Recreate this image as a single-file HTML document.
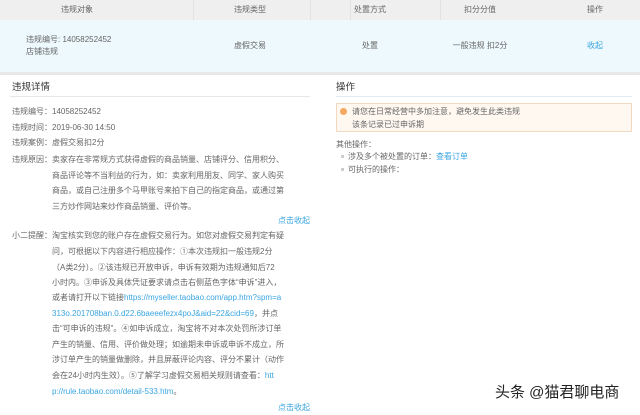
<!DOCTYPE html>
<html><head><meta charset="utf-8"><style>
*{margin:0;padding:0}
body{width:640px;height:415px;background:#fff;position:relative;overflow:hidden;font-family:"Liberation Sans","Noto Sans CJK SC",sans-serif;font-size:8px;color:#666}
.a{position:absolute;white-space:nowrap;line-height:12px}
.l{color:#3aa5e0}
.c{transform:translateX(-50%)}
</style></head><body>
<div style="position:absolute;left:0;top:0;width:640px;height:20px;background:#efefef"></div>
<div style="position:absolute;left:193px;top:0;width:1px;height:20px;background:#e2e2e2"></div>
<div style="position:absolute;left:310px;top:0;width:1px;height:20px;background:#e2e2e2"></div>
<div style="position:absolute;left:350px;top:0;width:1px;height:20px;background:#e2e2e2"></div>
<div style="position:absolute;left:440px;top:0;width:1px;height:20px;background:#e2e2e2"></div>
<div style="position:absolute;left:0;top:20px;width:640px;height:52px;background:#eef9fd"></div>
<div style="position:absolute;left:0;top:72px;width:640px;height:3px;background:#e8e8e8"></div>
<div class="a c" style="left:77px;top:4px">违规对象</div>
<div class="a c" style="left:250px;top:4px">违规类型</div>
<div class="a c" style="left:370px;top:4px">处置方式</div>
<div class="a c" style="left:480px;top:4px">扣分分值</div>
<div class="a c" style="left:595px;top:4px">操作</div>
<div class="a" style="left:26px;top:34px">违规编号: 14058252452</div>
<div class="a" style="left:26px;top:46px">店铺违规</div>
<div class="a c" style="left:250px;top:40px">虚假交易</div>
<div class="a c" style="left:370px;top:40px">处置</div>
<div class="a c" style="left:480px;top:40px">一般违规 扣2分</div>
<div class="a c l" style="left:595px;top:40px">收起</div>

<div class="a" style="left:12px;top:82px;font-size:9.5px;color:#333">违规详情</div>
<div style="position:absolute;left:10px;top:96px;width:300px;height:1px;background:#e6e6e6"></div>
<div class="a" style="left:12px;top:106px">违规编号：14058252452</div>
<div class="a" style="left:12px;top:122px">违规时间：2019-06-30 14:50</div>
<div class="a" style="left:12px;top:137px">违规案例：虚假交易扣2分</div>
<div class="a" style="left:12px;top:154px">违规原因：卖家存在非常规方式获得虚假的商品销量、店铺评分、信用积分、</div>
<div class="a" style="left:52px;top:170px">商品评论等不当利益的行为，如：卖家利用朋友、同学、家人购买</div>
<div class="a" style="left:52px;top:185px">商品，或自己注册多个马甲账号来拍下自己的指定商品，或通过第</div>
<div class="a" style="left:52px;top:201px">三方炒作网站来炒作商品销量、评价等。</div>
<div class="a l" style="left:278px;top:215px">点击收起</div>
<div class="a" style="left:12px;top:230px">小二提醒：淘宝核实到您的账户存在虚假交易行为。如您对虚假交易判定有疑</div>
<div class="a" style="left:52px;top:246px">问，可根据以下内容进行相应操作：①本次违规扣一般违规2分</div>
<div class="a" style="left:52px;top:262px">（A类2分）。②该违规已开放申诉，申诉有效期为违规通知后72</div>
<div class="a" style="left:52px;top:277px">小时内。③申诉及具体凭证要求请点击右侧蓝色字体“申诉”进入，</div>
<div class="a" style="left:52px;top:292px">或者请打开以下链接<span class="l">https://myseller.taobao.com/app.htm?spm=a</span></div>
<div class="a" style="left:52px;top:308px"><span class="l">313o.201708ban.0.d22.6baeeefezx4poJ&amp;aid=22&amp;cid=69</span>，并点</div>
<div class="a" style="left:52px;top:323px">击“可申诉的违规”。④如申诉成立，淘宝将不对本次处罚所涉订单</div>
<div class="a" style="left:52px;top:339px">产生的销量、信用、评价做处理；如逾期未申诉或申诉不成立，所</div>
<div class="a" style="left:52px;top:354px">涉订单产生的销量做删除，并且屏蔽评论内容、评分不累计（动作</div>
<div class="a" style="left:52px;top:370px">会在24小时内生效）。⑤了解学习虚假交易相关规则请查看：<span class="l">htt</span></div>
<div class="a" style="left:52px;top:386px"><span class="l">p://rule.taobao.com/detail-533.htm</span>。</div>
<div class="a l" style="left:278px;top:402px">点击收起</div>

<div class="a" style="left:336px;top:82px;font-size:9.5px;color:#333">操作</div>
<div style="position:absolute;left:336px;top:96px;width:296px;height:1px;background:#e3ebf5"></div>
<div style="position:absolute;left:336px;top:103px;width:294px;height:27px;background:#fff8f0;border:1px solid #f3d9c0"></div>
<div style="position:absolute;left:340px;top:108px;width:7px;height:7px;border-radius:50%;background:#f5a860"></div>
<div class="a" style="left:352px;top:106px">请您在日常经营中多加注意，避免发生此类违规</div>
<div class="a" style="left:352px;top:119px">该条记录已过申诉期</div>
<div class="a" style="left:336px;top:139px">其他操作：</div>
<div style="position:absolute;left:341px;top:155px;width:3px;height:3px;background:#ccc"></div>
<div class="a" style="left:348px;top:151px">涉及多个被处置的订单：<span class="l">查看订单</span></div>
<div style="position:absolute;left:341px;top:168px;width:3px;height:3px;background:#ccc"></div>
<div class="a" style="left:348px;top:164px">可执行的操作：</div>

<div class="a" style="left:495px;top:384px;font-size:15px;line-height:18px;color:#222;text-shadow:0 0 2px #fff,0 0 2px #fff">头条 @猫君聊电商</div>
</body></html>
